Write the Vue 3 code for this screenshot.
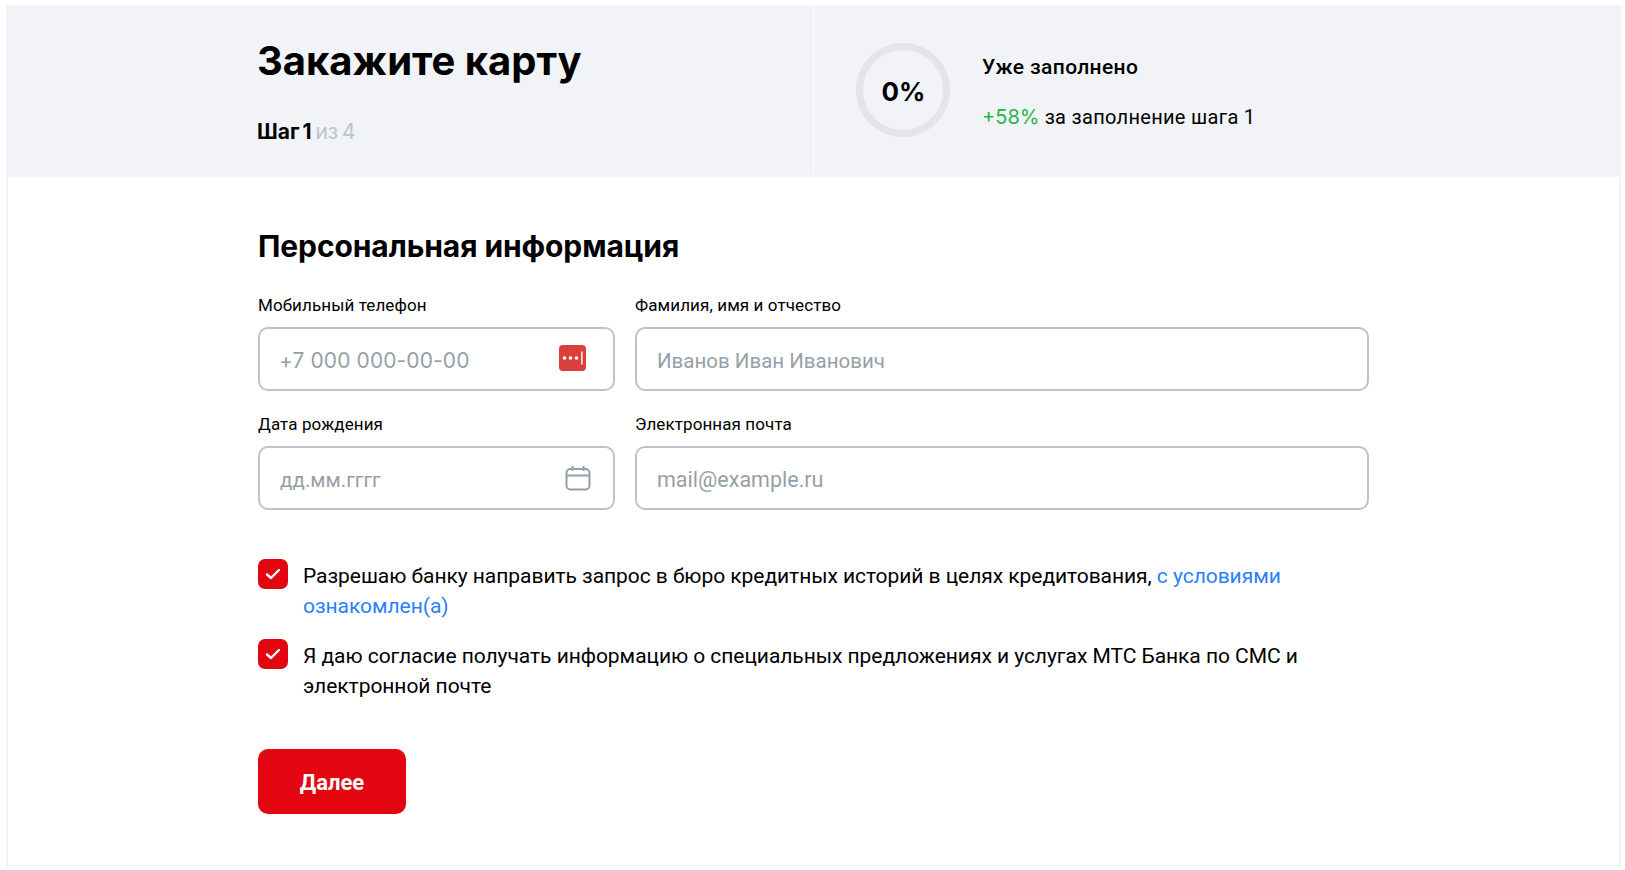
<template>
  <div class="card">
    <header class="top">
      <div class="top-left">
        <h1 class="title">Закажите карту</h1>
        <div class="step"><b>Шаг 1</b> <span>из 4</span></div>
      </div>
      <div class="top-right">
        <div class="ring">0%</div>
        <div class="progress-text">
          <div class="progress-head">Уже заполнено</div>
          <div class="progress-note"><span class="green">+58%</span> за заполнение шага 1</div>
        </div>
      </div>
    </header>

    <main class="content">
      <h2 class="section">Персональная информация</h2>

      <div class="fields">
        <label class="field">
          <span class="label">Мобильный телефон</span>
          <span class="box">
            <input class="inp phone" placeholder="+7 000 000-00-00" />
            <svg class="ico-phone" width="27" height="26" viewBox="0 0 27 26">
              <rect width="27" height="26" rx="4" fill="#db3f3c" />
              <circle cx="5.5" cy="13" r="1.8" fill="#fff" />
              <circle cx="11.5" cy="13" r="1.8" fill="#fff" />
              <circle cx="17.5" cy="13" r="1.8" fill="#fff" />
              <rect x="22.2" y="6.5" width="1.4" height="13" fill="#fff" />
            </svg>
          </span>
        </label>
        <label class="field">
          <span class="label">Фамилия, имя и отчество</span>
          <span class="box">
            <input class="inp" placeholder="Иванов Иван Иванович" />
          </span>
        </label>
        <label class="field">
          <span class="label">Дата рождения</span>
          <span class="box">
            <input class="inp" placeholder="дд.мм.гггг" />
            <svg class="ico-cal" width="26" height="26" viewBox="0 0 26 26" fill="none" stroke="#969fa8" stroke-width="2">
              <rect x="1.5" y="4" width="23" height="20.5" rx="4" />
              <path d="M1.5 10.5h23M7.5 1v5M18.5 1v5" />
            </svg>
          </span>
        </label>
        <label class="field">
          <span class="label">Электронная почта</span>
          <span class="box">
            <input class="inp mail" placeholder="mail@example.ru" />
          </span>
        </label>
      </div>

      <div class="checks">
        <div class="check" v-for="item in agreements" :key="item.text">
          <span class="tick">
            <svg width="16" height="12" viewBox="0 0 16 12" fill="none" stroke="#fff" stroke-width="2.4" stroke-linecap="round" stroke-linejoin="round">
              <path d="M2 6.5l4 3.5 8-8" />
            </svg>
          </span>
          <p class="check-text">{{ item.text }}<a v-if="item.link" class="link" href="#">{{ item.link }}</a></p>
        </div>
      </div>

      <button class="next" type="button">Далее</button>
    </main>
  </div>
</template>

<script setup>
const agreements = [
  {
    text: 'Разрешаю банку направить запрос в бюро кредитных историй в целях кредитования, ',
    link: 'с условиями ознакомлен(а)'
  },
  {
    text: 'Я даю согласие получать информацию о специальных предложениях и услугах МТС Банка по СМС и электронной почте'
  }
];
</script>

<style>
html, body {
  background: #fff;
  overflow: hidden;
}
</style>

<style scoped>
.card {
  box-sizing: border-box;
  width: 1615px;
  height: 862px;
  margin: 5px 0 0 6px;
  border: solid #f2f3f7;
  border-width: 0 2px 2px 2px;
  font-family: Roboto, "Liberation Sans", sans-serif;
  color: #000;
}

.top {
  display: grid;
  grid-template-columns: 808px 1fr;
  height: 172px;
  margin: 0 -2px;
  background: #f2f3f7;
}

.top-left {
  padding-left: 251px;
  border-right: 1px solid #fbfbfd;
  height: 170px;
}

.title {
  margin: 31px 0 0;
  font: 700 40px/50px Inter, sans-serif;
}

.step {
  margin-top: 34px;
  font: 400 21px/24px Inter, sans-serif;
  word-spacing: -2px;
}

.step span {
  color: #bcc3d0;
}

.top-right {
  display: flex;
  align-items: flex-start;
  padding: 38px 0 0 42px;
}

.ring {
  box-sizing: border-box;
  width: 94px;
  height: 94px;
  flex: none;
  padding: 4px 0 0 1px;
  border: 7px solid #e2e5eb;
  border-radius: 50%;
  display: flex;
  align-items: center;
  justify-content: center;
  font: 700 26px/30px Inter, sans-serif;
}

.progress-text {
  margin-left: 32px;
}

.progress-head {
  margin-top: 11px;
  font-size: 21px;
  font-weight: 500;
  line-height: 26px;
  letter-spacing: 0.35px;
}

.progress-note {
  margin-top: 24px;
  font-size: 20px;
  line-height: 26px;
  letter-spacing: 0.3px;
}

.green {
  color: #26b44c;
  font-family: Inter, sans-serif;
  letter-spacing: 0;
}

.content {
  width: 1111px;
  padding-left: 250px;
}

.section {
  margin: 51px 0 0;
  font: 700 30px/36px Inter, sans-serif;
  letter-spacing: -0.1px;
}

.fields {
  display: grid;
  grid-template-columns: 357px 734px;
  column-gap: 20px;
  row-gap: 21px;
  margin-top: 29px;
}

.field {
  display: block;
}

.label {
  display: block;
  font-size: 17px;
  line-height: 24px;
  letter-spacing: 0.1px;
  margin-bottom: 10px;
}

.box {
  box-sizing: border-box;
  display: flex;
  align-items: center;
  height: 64px;
  padding: 0 20px;
  border: 2px solid #bcc3d0;
  border-radius: 10px;
}

.inp {
  flex: 1;
  min-width: 0;
  border: 0;
  outline: 0;
  padding: 3px 0 0;
  background: none;
  font: 400 20.5px/30px Roboto, sans-serif;
  color: #000;
}

.inp.phone {
  margin-left: -1px;
  padding-top: 4px;
  font: 400 21px/30px Inter, sans-serif;
  letter-spacing: 0.1px;
}

.inp.mail {
  font-size: 21.5px;
}

.inp::placeholder {
  color: #969fa8;
  opacity: 1;
}

.ico-phone {
  flex: none;
  margin: -2px 7px 0 0;
}

.ico-cal {
  flex: none;
  margin-right: 2px;
}

.checks {
  margin-top: 49px;
}

.check {
  display: flex;
  align-items: flex-start;
  margin-bottom: 18px;
}

.tick {
  flex: none;
  width: 30px;
  height: 30px;
  border-radius: 7px;
  background: #e30611;
  display: flex;
  align-items: center;
  justify-content: center;
}

.check-text {
  margin: 0 0 0 15px;
  padding-top: 2px;
  font-size: 21px;
  line-height: 30px;
  letter-spacing: -0.05px;
}

.link {
  color: #2a7ffc;
  text-decoration: none;
}

.next {
  display: block;
  width: 148px;
  height: 65px;
  margin-top: 48px;
  padding: 2px 0 0;
  border: 0;
  border-radius: 10px;
  background: #e30611;
  color: #fff;
  font: 700 22px/26px Roboto, sans-serif;
}
</style>
